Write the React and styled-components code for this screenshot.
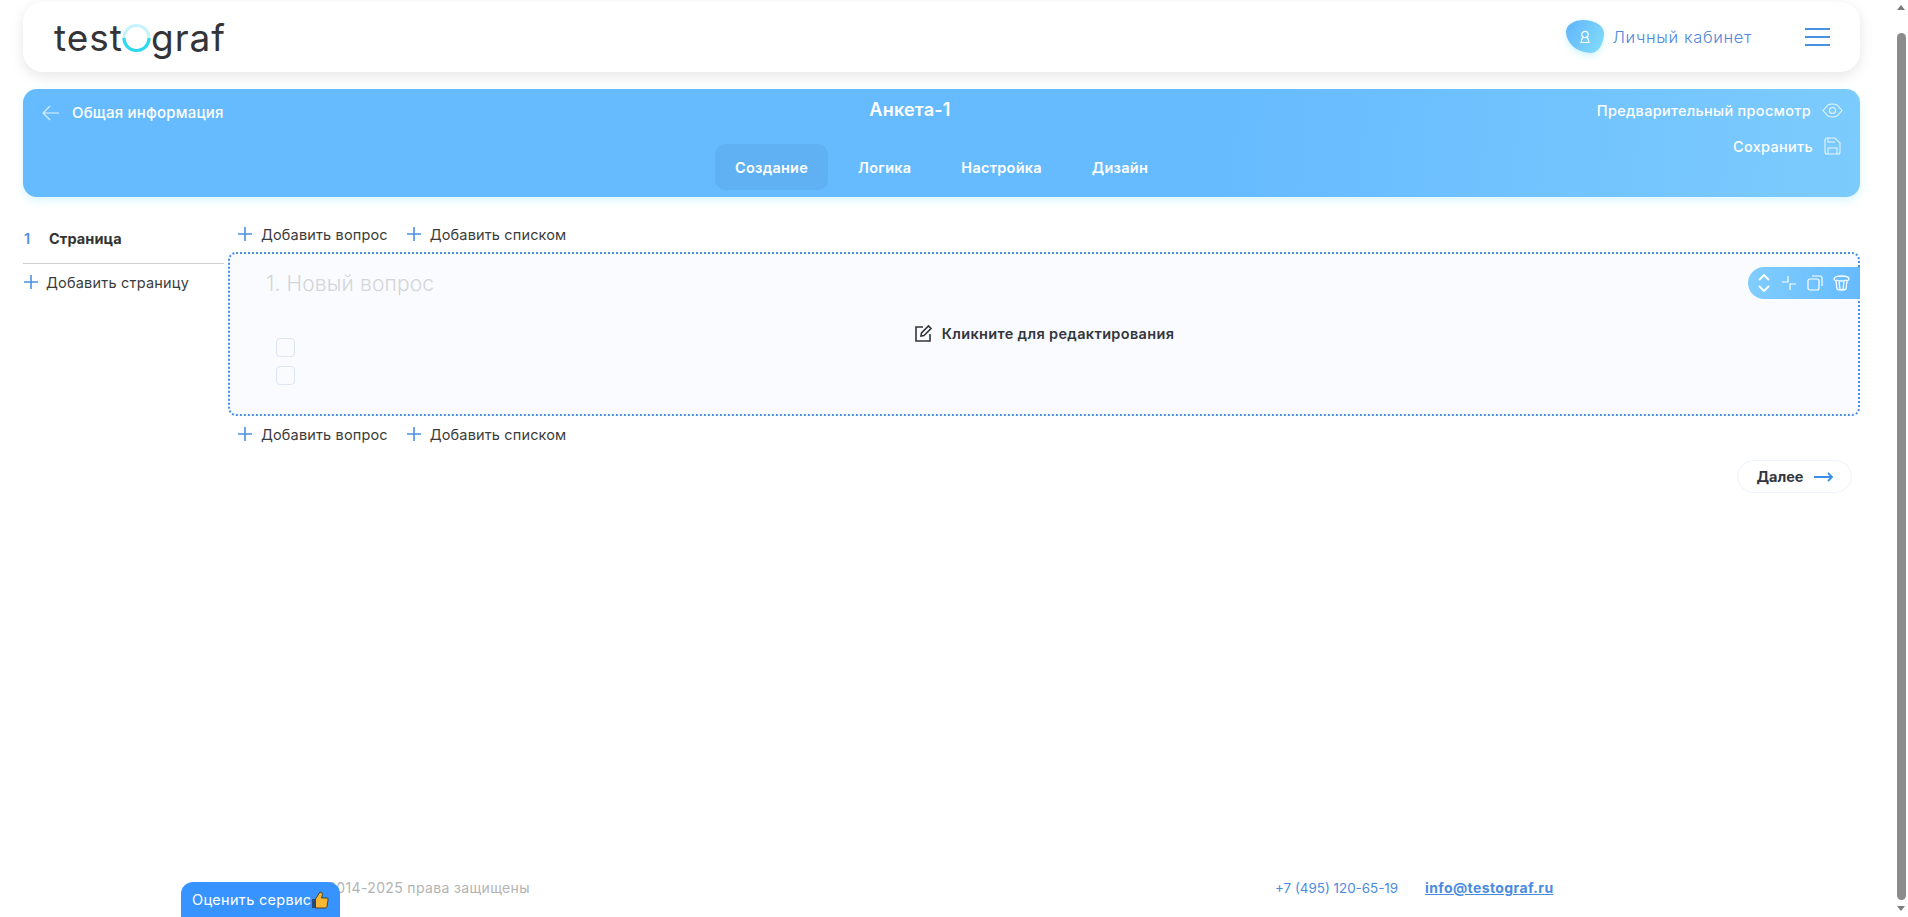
import React from 'react';
import styled, { createGlobalStyle } from 'styled-components';

const Global = createGlobalStyle`
    html {
        overflow: hidden;
    }
    body {
        margin: 0;
        background: #fff;
        font-family: Inter, "Noto Sans", sans-serif;
        color: #333;
    }
`

const Page = styled.div`
    box-sizing: border-box;
    height: 917px;
    padding: 2px 48px 0 23px;
    display: flex;
    flex-direction: column;
`

const Scrollbar = styled.div`
    position: fixed;
    top: 0;
    right: 0;
    bottom: 0;
    width: 15px;
    background: #fff;
`

const ScrollThumb = styled.div`
    position: absolute;
    top: 33px;
    bottom: 17px;
    left: 4px;
    width: 9px;
    background: #8c8c8c;
    border-radius: 5px;
`

const ScrollArrow = styled.span`
    position: absolute;
    left: 4px;
    ${p => (p.$down ? 'bottom: 6px;' : 'top: 5px;')}
    border-left: 4.5px solid transparent;
    border-right: 4.5px solid transparent;
    ${p => (p.$down ? 'border-top: 5px solid #7c7c7c;' : 'border-bottom: 5px solid #7c7c7c;')}
`

const Header = styled.header`
    height: 70px;
    flex: none;
    display: flex;
    align-items: center;
    padding: 0 31px;
    background: #fff;
    border-radius: 20px;
    box-shadow: 0 4px 14px rgba(0, 0, 0, 0.1);
    margin-bottom: 17px;
`

const Logo = styled.div`
    display: flex;
    align-items: center;
    font-size: 37px;
    font-weight: 400;
    color: #333338;
    letter-spacing: 1px;
    flex: 1;
`

const Cabinet = styled.a`
    display: flex;
    align-items: center;
    gap: 9px;
    color: #4f88dc;
    font-size: 16.5px;
    font-weight: 300;
    line-height: 20px;
    letter-spacing: 0.65px;
    margin-right: 53px;
    padding-bottom: 1px;
`

const Blob = styled.span`
    width: 38px;
    height: 33px;
    display: flex;
    align-items: center;
    justify-content: center;
    border-radius: 45% 55% 35% 65% / 35% 40% 60% 65%;
    background: linear-gradient(120deg, #5fb4fb, #85def9);
    box-shadow: 0 3px 6px rgba(110, 220, 250, 0.3);
`

const Burger = styled.div`
    width: 25px;
    display: flex;
    flex-direction: column;
    gap: 6px;
    margin-right: -1px;
    span {
        height: 2px;
        background: #4a90e2;
    }
`

const Bar = styled.section`
    flex: none;
    height: 108px;
    position: relative;
    display: flex;
    color: #fff;
    border-radius: 14px;
    background: linear-gradient(95deg, #66bbff 0%, #66bbff 65%, #7ccbfd 100%);
    box-shadow: 0 4px 8px rgba(140, 230, 255, 0.3);
`

const Back = styled.div`
    width: 692px;
    box-sizing: border-box;
    padding: 14px 0 0 19px;
    display: flex;
    align-items: flex-start;
    gap: 12px;
    font-size: 15px;
    font-weight: 500;
    letter-spacing: 0.2px;
    line-height: 20px;
    svg {
        flex: none;
    }
`

const Center = styled.div`
    display: flex;
    flex-direction: column;
    align-items: flex-start;
`

const BarTitle = styled.h1`
    margin: 9px 0 0 195px;
    transform: translateX(-50%);
    font-size: 18px;
    font-weight: 600;
    letter-spacing: 0.2px;
    line-height: 24px;
`

const Tabs = styled.nav`
    display: flex;
    gap: 10px;
    margin-top: 22px;
`

const Tab = styled.div`
    height: 46px;
    padding: 0 20px;
    display: flex;
    align-items: center;
    box-sizing: border-box;
    font-size: 14.5px;
    font-weight: 600;
    letter-spacing: 0.25px;
    border-radius: 10px;
    background: ${p => (p.$active ? '#5fb1f4' : 'transparent')};
`

const Actions = styled.div`
    flex: 1;
    padding: 10px 17px 0 0;
    display: flex;
    flex-direction: column;
    align-items: flex-end;
    gap: 14px;
`

const Action = styled.div`
    display: flex;
    align-items: center;
    gap: 11px;
    height: 22px;
    font-size: 14.5px;
    font-weight: 500;
    letter-spacing: 0.3px;
`

const Content = styled.main`
    display: flex;
    padding-top: 25px;
`

const Sidebar = styled.aside`
    width: 201px;
    flex: none;
    margin-right: 4px;
`

const PageRow = styled.div`
    height: 42px;
    box-sizing: border-box;
    padding-top: 7px;
    display: flex;
    align-items: flex-start;
    font-size: 14.5px;
    font-weight: 700;
    letter-spacing: 0.1px;
    line-height: 20px;
    border-bottom: 1px solid #d0d0d0;
    b {
        width: 25px;
        padding-left: 1px;
        color: #4a90e2;
        font-weight: 600;
    }
`

const AddPage = styled.div`
    display: flex;
    align-items: center;
    gap: 7px;
    height: 24px;
    margin-top: 6px;
    font-size: 14.5px;
    font-weight: 400;
    letter-spacing: 0.2px;
    color: #3c3c3c;
`

const Main = styled.div`
    flex: 1;
    display: flex;
    flex-direction: column;
`

const AddRow = styled.div`
    height: 24px;
    padding-left: 9px;
    display: flex;
    gap: 18px;
    font-size: 14.5px;
    letter-spacing: 0.15px;
    color: #3c3c3c;
`

const AddItem = styled.div`
    display: flex;
    align-items: center;
    gap: 8px;
`

const Card = styled.div`
    position: relative;
    box-sizing: border-box;
    height: 164px;
    margin: 6px 0;
    padding: 17px 36px;
    background: #f9fbff;
    border: 2px dotted #4a90e2;
    border-radius: 8px;
`

const Question = styled.div`
    font-size: 21px;
    font-weight: 300;
    letter-spacing: 0.15px;
    line-height: 26px;
    color: #d4d5d8;
`

const Checks = styled.div`
    margin: 41px 0 0 10px;
    display: flex;
    flex-direction: column;
    gap: 9px;
`

const Check = styled.span`
    width: 19px;
    height: 19px;
    box-sizing: border-box;
    border: 1px solid #dbe6f4;
    border-radius: 4px;
`

const Hint = styled.div`
    position: absolute;
    inset: 0 0 2px;
    display: flex;
    align-items: center;
    justify-content: center;
    gap: 9px;
    font-size: 14.5px;
    font-weight: 600;
    letter-spacing: 0.35px;
    color: #33363c;
`

const Tools = styled.div`
    position: absolute;
    top: 13px;
    right: -2px;
    width: 112px;
    height: 32px;
    box-sizing: border-box;
    padding: 0 10px 0 9px;
    display: flex;
    align-items: center;
    justify-content: space-between;
    border-radius: 16px 0 0 16px;
    background: linear-gradient(90deg, #80cdfd, #66bbff);
`

const Next = styled.div`
    align-self: flex-end;
    width: 115px;
    height: 33px;
    box-sizing: border-box;
    margin: 14px 8px 0 0;
    display: flex;
    align-items: center;
    justify-content: center;
    gap: 10px;
    font-size: 14.5px;
    font-weight: 700;
    color: #33363c;
    border: 1px solid #edf2fb;
    border-radius: 17px;
`

const Footer = styled.footer`
    margin-top: auto;
    height: 39px;
    display: flex;
    align-items: flex-start;
    line-height: 20px;
    font-size: 14px;
`

const Copy = styled.div`
    margin-left: 287px;
    width: 965px;
    color: #b3b3b3;
    letter-spacing: 0.35px;
`

const Phone = styled.div`
    width: 150px;
    color: #4a8be0;
    font-size: 13.4px;
`

const Email = styled.a`
    color: #4a8be0;
    font-weight: 700;
    letter-spacing: 0.4px;
    text-decoration: underline;
`

const Rate = styled.div`
    position: fixed;
    left: 181px;
    bottom: 0;
    width: 159px;
    height: 35px;
    box-sizing: border-box;
    padding: 8px 0 0 11px;
    display: flex;
    align-items: flex-start;
    color: #fff;
    font-size: 14.5px;
    letter-spacing: 0.3px;
    line-height: 20px;
    background: #3793ff;
    border-radius: 12px 12px 0 0;
`

const Plus = () => (
    <svg width="16" height="16" viewBox="0 0 16 16" fill="none" stroke="#4a90e2" strokeWidth="1.6">
        <path d="M8 1v14M1 8h14" />
    </svg>
)

const AddLinks = () => (
    <AddRow>
        <AddItem><Plus />Добавить вопрос</AddItem>
        <AddItem><Plus />Добавить списком</AddItem>
    </AddRow>
)

const App = () => {
    return (
        <Page>
            <Global />
            <Scrollbar>
                <ScrollArrow />
                <ScrollThumb />
                <ScrollArrow $down />
            </Scrollbar>
            <Header>
                <Logo>
                    test
                    <svg width="29" height="30" viewBox="0 0 29 30" fill="none" style={{ margin: '2px 0 0 -1px' }}>
                        <circle cx="14.500" cy="15" r="12.500" stroke="#c4f3fa" strokeWidth="3.200" />
                        <path d="M2 15c0 7 5.500 12.500 12.500 12.500S27 22 27 15" stroke="#2fd8ec" strokeWidth="3.200" />
                    </svg>
                    graf
                </Logo>
                <Cabinet>
                    <Blob>
                        <svg width="12" height="14" viewBox="0 0 12 14" fill="none" stroke="#fff" strokeWidth="1.2">
                            <circle cx="6" cy="4.500" r="3.200" />
                            <path d="M3.500 7.500 2 12.500h8L8.500 7.500" />
                        </svg>
                    </Blob>
                    Личный кабинет
                </Cabinet>
                <Burger><span /><span /><span /></Burger>
            </Header>
            <Bar>
                <Back>
                    <svg width="18" height="16" viewBox="0 0 18 16" fill="none" stroke="#dff1ff" strokeWidth="1.1" style={{ marginTop: '2px' }}>
                        <path d="M17 8H1M8 1 1 8l7 7" />
                    </svg>
                    Общая информация
                </Back>
                <Center>
                    <BarTitle>Анкета-1</BarTitle>
                    <Tabs>
                        <Tab $active>Создание</Tab>
                        <Tab>Логика</Tab>
                        <Tab>Настройка</Tab>
                        <Tab>Дизайн</Tab>
                    </Tabs>
                </Center>
                <Actions>
                    <Action>
                        Предварительный просмотр
                        <svg width="21" height="15" viewBox="0 0 21 15" fill="none" stroke="#e6f5ff" strokeWidth="1.1">
                            <path d="M1 7.500 6 2q4.500-2 9 0l5 5.500-5 5.500q-4.500 2-9 0z" />
                            <circle cx="10.500" cy="7.500" r="3" />
                        </svg>
                    </Action>
                    <Action>
                        Сохранить
                        <svg width="17" height="18" viewBox="0 0 17 18" fill="none" stroke="#e6f5ff" strokeWidth="1.1" style={{ marginRight: '2px' }}>
                            <path d="M1 3q0-2 2-2h8l5 5v9q0 2-2 2H3q-2 0-2-2z" />
                            <path d="M4 17v-6h9v6M4 1v4h7" />
                        </svg>
                    </Action>
                </Actions>
            </Bar>
            <Content>
                <Sidebar>
                    <PageRow><b>1</b>Страница</PageRow>
                    <AddPage><Plus />Добавить страницу</AddPage>
                </Sidebar>
                <Main>
                    <AddLinks />
                    <Card>
                        <Question>1. Новый вопрос</Question>
                        <Checks><Check /><Check /></Checks>
                        <Hint>
                            <svg width="19" height="19" viewBox="0 0 19 19" fill="none" stroke="#33363c" strokeWidth="1.6">
                                <path d="M9 3H2v14h14v-7" />
                                <path d="m7 12 .5-3L14.500 2l2.500 2.500-7 7z" />
                            </svg>
                            Кликните для редактирования
                        </Hint>
                        <Tools>
                            <svg width="14" height="22" viewBox="0 0 14 22" fill="none" stroke="#fff" strokeWidth="1.8">
                                <path d="m2 8 5-5 5 5M2 14l5 5 5-5" />
                            </svg>
                            <svg width="16" height="16" viewBox="0 0 16 16" fill="none" stroke="#fff" strokeWidth="1.2">
                                <path d="M1 7h6V1M9 15V9h6" />
                            </svg>
                            <svg width="16" height="16" viewBox="0 0 16 16" fill="none" stroke="#fff" strokeWidth="1.2">
                                <rect x="1" y="4" width="11" height="11" rx="2" />
                                <path d="M5 1h8q2 0 2 2v8" />
                            </svg>
                            <svg width="17" height="16" viewBox="0 0 17 16" fill="none" stroke="#fff" strokeWidth="1.3">
                                <path d="M1 4q0-3 7.500-3T16 4q0 1-2 2l-1 8q-1 1-4.500 1T4 14L3 6Q1 5 1 4z" />
                                <path d="M3 5q5.500 2 11 0M6 6.500 7 14M11 6.500 10 14" />
                            </svg>
                        </Tools>
                    </Card>
                    <AddLinks />
                    <Next>
                        Далее
                        <svg width="19" height="10" viewBox="0 0 19 10" fill="none" stroke="#3a8eea" strokeWidth="1.8">
                            <path d="M0 5h18M14 1l4 4-4 4" />
                        </svg>
                    </Next>
                </Main>
            </Content>
            <Footer>
                <Copy>© 2014-2025 права защищены</Copy>
                <Phone>+7 (495) 120-65-19</Phone>
                <Email>info@testograf.ru</Email>
            </Footer>
            <Rate>
                Оценить сервис
                <svg width="18" height="18" viewBox="0 0 18 18" style={{ marginTop: '1px' }}>
                    <path d="M1 8h3.500v9H1z" fill="#2b4a7a" />
                    <path d="M4.500 8 9 1q2.500 0 2.500 2.500L10.500 7H16q1.500 0 1 2l-1 6.500q-.5 1.500-2 1.500H4.500z" fill="#f7b733" stroke="#3a2c10" strokeWidth=".8" />
                </svg>
            </Rate>
        </Page>
    )
}

export default App;
